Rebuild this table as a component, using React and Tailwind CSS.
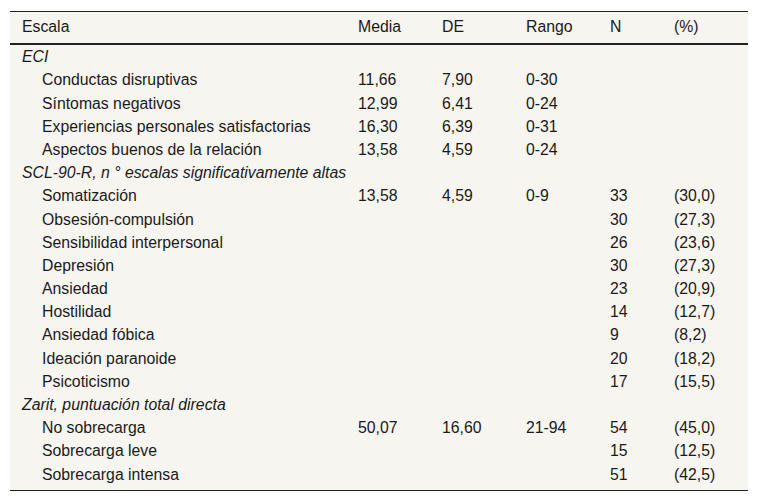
const sections = [
  {
    title: "ECI",
    rows: [
      ["Conductas disruptivas", "11,66", "7,90", "0-30", "", ""],
      ["Síntomas negativos", "12,99", "6,41", "0-24", "", ""],
      ["Experiencias personales satisfactorias", "16,30", "6,39", "0-31", "", ""],
      ["Aspectos buenos de la relación", "13,58", "4,59", "0-24", "", ""],
    ],
  },
  {
    title: "SCL-90-R, n\u00a0° escalas significativamente altas",
    rows: [
      ["Somatización", "13,58", "4,59", "0-9", "33", "(30,0)"],
      ["Obsesión-compulsión", "", "", "", "30", "(27,3)"],
      ["Sensibilidad interpersonal", "", "", "", "26", "(23,6)"],
      ["Depresión", "", "", "", "30", "(27,3)"],
      ["Ansiedad", "", "", "", "23", "(20,9)"],
      ["Hostilidad", "", "", "", "14", "(12,7)"],
      ["Ansiedad fóbica", "", "", "", "9", "(8,2)"],
      ["Ideación paranoide", "", "", "", "20", "(18,2)"],
      ["Psicoticismo", "", "", "", "17", "(15,5)"],
    ],
  },
  {
    title: "Zarit, puntuación total directa",
    rows: [
      ["No sobrecarga", "50,07", "16,60", "21-94", "54", "(45,0)"],
      ["Sobrecarga leve", "", "", "", "15", "(12,5)"],
      ["Sobrecarga intensa", "", "", "", "51", "(42,5)"],
    ],
  },
];

export default function App() {
  return (
    <div className="w-[759px] h-[503px] bg-white pt-[11px] pl-[10px] font-['Liberation_Sans',Arial,sans-serif] text-[15.8px] text-[#1a1a1a]">
      <table className="w-[738px] table-fixed border-collapse bg-[#f7f5f0] border-t border-b border-[#222]">
        <colgroup>
          <col className="w-[338px]" />
          <col className="w-[84px]" />
          <col className="w-[84px]" />
          <col className="w-[84px]" />
          <col className="w-[64px]" />
          <col className="w-[84px]" />
        </colgroup>
        <thead>
          <tr className="h-[32px] border-b-2 border-[#222]">
            <th className="text-left font-normal pl-[12px]">Escala</th>
            <th className="text-left font-normal pl-[10px]">Media</th>
            <th className="text-left font-normal pl-[10px]">DE</th>
            <th className="text-left font-normal pl-[10px]">Rango</th>
            <th className="text-left font-normal pl-[10px]">N</th>
            <th className="text-left font-normal pl-[10px]">(%)</th>
          </tr>
        </thead>
        <tbody>
          <tr className="h-[2px]"><td colSpan={6}></td></tr>
          {sections.map((s) => (
            <>
              <tr key={s.title} className="h-[23.2px]">
                <td colSpan={6} className="pl-[12px] italic leading-none whitespace-nowrap">{s.title}</td>
              </tr>
              {s.rows.map((r) => (
                <tr key={r[0]} className="h-[23.2px]">
                  <td className="pl-[32px] leading-none whitespace-nowrap">{r[0]}</td>
                  {r.slice(1).map((v, i) => (
                    <td key={i} className="pl-[10px] leading-none">{v}</td>
                  ))}
                </tr>
              ))}
            </>
          ))}
          <tr className="h-[4px]"><td colSpan={6}></td></tr>
        </tbody>
      </table>
    </div>
  );
}
